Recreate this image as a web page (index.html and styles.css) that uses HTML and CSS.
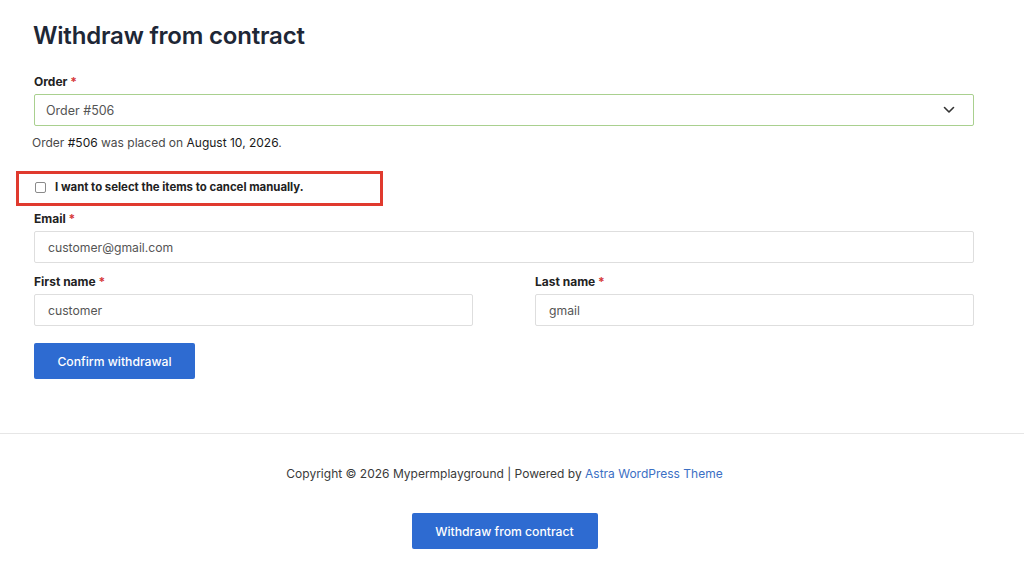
FILE: index.html
```html
<!DOCTYPE html>
<html lang="en">
<head>
<meta charset="utf-8">
<title>Withdraw from contract</title>
<link rel="stylesheet" href="styles.css">
</head>
<body>
<main class="page">
  <h1 class="title">Withdraw from contract</h1>
  <form class="form">
    <label class="field-label">Order <span class="req">*</span></label>
    <div class="select">
      <span class="select-value">Order #506</span>
      <svg class="chev" width="12" height="8" viewBox="0 0 12 8"><path d="M1.5 1.5 L6 6 L10.5 1.5" fill="none" stroke="#333" stroke-width="1.6" stroke-linecap="round" stroke-linejoin="round"/></svg>
    </div>
    <p class="help">Order <b>#506</b> was placed on <b>August 10, 2026</b>.</p>
    <div class="check-row">
      <span class="checkbox"></span>
      <span class="check-text">I want to select the items to cancel manually.</span>
      <span class="highlight"></span>
    </div>
    <label class="field-label email-label">Email <span class="req">*</span></label>
    <div class="input">customer@gmail.com</div>
    <div class="name-row">
      <div class="name-col">
        <label class="field-label">First name <span class="req">*</span></label>
        <div class="input">customer</div>
      </div>
      <div class="name-col">
        <label class="field-label">Last name <span class="req">*</span></label>
        <div class="input">gmail</div>
      </div>
    </div>
    <button type="button" class="btn confirm">Confirm withdrawal</button>
  </form>
</main>
<footer class="footer">
  <p class="copy">Copyright © 2026 Mypermplayground | Powered by <a href="#" class="link">Astra WordPress Theme</a></p>
  <button type="button" class="btn withdraw">Withdraw from contract</button>
</footer>
</body>
</html>
```
FILE: styles.css
```css
* { box-sizing: border-box; }
html, body { margin: 0; padding: 0; background: #fff; }
body {
  font-family: Inter, "Noto Sans", "Liberation Sans", sans-serif;
  color: #3a3a3a;
  width: 1024px;
  overflow: hidden;
}
.page { padding: 0 50px 0 34px; }
.title {
  margin: 0 0 0 -1px;
  padding-top: 21px;
  font-size: 24px;
  line-height: 29px;
  font-weight: 600;
  color: #1e2736;
  letter-spacing: -0.2px;
}
.form { display: flex; flex-direction: column; }
.field-label {
  display: block;
  margin-top: 24px;
  font-size: 12px;
  line-height: 16px;
  font-weight: 700;
  color: #222;
}
.req { color: #d63638; }
.select {
  margin-top: 4px;
  height: 32px;
  border: 1px solid #a9d08f;
  border-radius: 2px;
  display: flex;
  align-items: center;
  justify-content: space-between;
  padding: 0 18px 0 11px;
  font-size: 12.5px;
  color: #555;
}
.chev { display: block; }
.help {
  margin: 8px 0 0 -2px;
  font-size: 12px;
  line-height: 18px;
  color: #4a4a4a;
}
.help b { font-weight: 400; color: #1a1a1a; }
.check-row {
  position: relative;
  margin-top: 26px;
  display: flex;
  align-items: center;
  height: 18px;
}
.checkbox {
  width: 11px;
  height: 11px;
  border: 1px solid #8a8a8a;
  border-radius: 2px;
  margin: 0 9px 0 1px;
  background: #fff;
}
.check-text {
  font-size: 11.4px;
  font-weight: 700;
  color: #222;
}
.highlight {
  position: absolute;
  left: -18px;
  top: -7px;
  width: 367px;
  height: 35px;
  border: 3px solid #e03a2e;
}
.email-label { margin-top: 15px; }
.input {
  margin-top: 4px;
  height: 32px;
  border: 1px solid #dedede;
  border-radius: 2px;
  display: flex;
  align-items: center;
  padding: 0 13px;
  font-size: 12.2px;
  color: #555;
}
.name-row {
  display: grid;
  grid-template-columns: 1fr 1fr;
  column-gap: 62px;
}
.name-col .field-label { margin-top: 11px; }
.btn {
  border: 0;
  border-radius: 2px;
  background: #2e6bd1;
  color: #fff;
  font-family: inherit;
  font-size: 12.2px;
  font-weight: 500;
  height: 36px;
  cursor: pointer;
}
.confirm {
  align-self: flex-start;
  margin-top: 17px;
  width: 161px;
}
.footer {
  margin-top: 54px;
  border-top: 1px solid #e6e6e6;
  display: flex;
  flex-direction: column;
  align-items: center;
  padding-right: 15px;
}
.copy {
  margin: 30px 0 0;
  font-size: 12px;
  line-height: 20px;
  color: #3a3a3a;
}
.link { color: #3b6fc4; text-decoration: none; }
.withdraw {
  margin-top: 29px;
  width: 186px;
}
```
